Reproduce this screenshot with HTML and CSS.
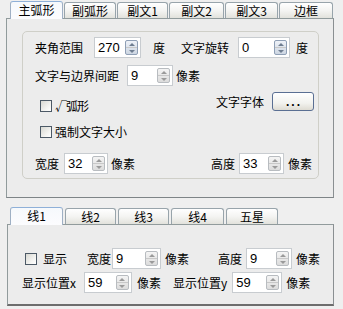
FILE: index.html
```html
<!DOCTYPE html>
<html>
<head>
<meta charset="utf-8">
<link rel="stylesheet" href="styles.css">
</head>
<body>
<div class="tabstrip top-strip">
  <div class="tab sel w53">主弧形</div>
  <div class="tab w52">副弧形</div>
  <div class="tab w51">副文1</div>
  <div class="tab w55">副文2</div>
  <div class="tab w53">副文3</div>
  <div class="tab w54">边框</div>
</div>
<div class="panel panel1">
  <div class="group">
    <div class="row r1">
      <span class="t">夹角范围</span>
      <div class="spin ml11 sw47 active"><span class="val">270</span><span class="btns"><i class="up"></i><i class="dn"></i></span></div>
      <span class="t ml12">度</span>
      <span class="t ml16">文字旋转</span>
      <div class="spin ml9 sw52 active"><span class="val">0</span><span class="btns"><i class="up"></i><i class="dn"></i></span></div>
      <span class="t ml6">度</span>
    </div>
    <div class="row r2">
      <span class="t">文字与边界间距</span>
      <div class="spin ml8 sw46"><span class="val">9</span><span class="btns"><i class="up"></i><i class="dn"></i></span></div>
      <span class="t ml3">像素</span>
    </div>
    <div class="mid">
      <div class="checks">
        <label class="chk"><span class="box"></span><span class="t narrow">√弧形</span></label>
        <label class="chk c2"><span class="box"></span><span class="t">强制文字大小</span></label>
      </div>
      <div class="fontpick">
        <span class="t">文字字体</span>
        <button class="dots">...</button>
      </div>
    </div>
    <div class="row r4">
      <span class="t">宽度</span>
      <div class="spin ml5 sw44"><span class="val">32</span><span class="btns"><i class="up"></i><i class="dn"></i></span></div>
      <span class="t ml3">像素</span>
      <span class="t ml76">高度</span>
      <div class="spin ml4 sw45"><span class="val">33</span><span class="btns"><i class="up"></i><i class="dn"></i></span></div>
      <span class="t ml4">像素</span>
    </div>
  </div>
</div>

<div class="tabstrip bottom-strip">
  <div class="tab sel w53">线1</div>
  <div class="tab w51 gap">线2</div>
  <div class="tab w51 gap">线3</div>
  <div class="tab w53 gap">线4</div>
  <div class="tab w52 gap">五星</div>
</div>
<div class="panel panel2">
  <div class="row p2r1">
    <label class="chk"><span class="box"></span><span class="t ml3">显示</span></label>
    <span class="t ml20">宽度</span>
    <div class="spin ml1 sw49"><span class="val">9</span><span class="btns"><i class="up"></i><i class="dn"></i></span></div>
    <span class="t ml4">像素</span>
    <span class="t ml29">高度</span>
    <div class="spin ml4 sw46"><span class="val">9</span><span class="btns"><i class="up"></i><i class="dn"></i></span></div>
    <span class="t ml4">像素</span>
  </div>
  <div class="row p2r2">
    <span class="t">显示位置x</span>
    <div class="spin ml8 sw48"><span class="val">59</span><span class="btns"><i class="up"></i><i class="dn"></i></span></div>
    <span class="t ml5">像素</span>
    <span class="t ml12">显示位置y</span>
    <div class="spin ml5 sw50"><span class="val">59</span><span class="btns"><i class="up"></i><i class="dn"></i></span></div>
    <span class="t ml4">像素</span>
  </div>
</div>
</body>
</html>
```
FILE: styles.css
```css
html, body {
  margin: 0;
  padding: 0;
}
body {
  width: 343px;
  height: 309px;
  overflow: hidden;
  background: #efefef;
  font-family: "Noto Sans CJK SC", "Noto Sans", sans-serif;
  font-size: 12px;
  color: #000;
}

/* tabs */
.tabstrip {
  display: flex;
  align-items: flex-end;
  padding-left: 10px;
  height: 18px;
  box-sizing: border-box;
}
.top-strip { padding-top: 1px; }
.bottom-strip { margin-top: 8px; height: 18px; }
.tab {
  height: 16px;
  box-sizing: border-box;
  border: 1px solid #98a4ab;
  border-bottom: none;
  border-radius: 3px 3px 0 0;
  background: linear-gradient(#ffffff, #f4f4f2 50%, #e2e2dc);
  text-align: center;
  line-height: 15px;
  margin-right: 1px;
  position: relative;
  top: 0;
}
.tab.sel {
  height: 18px;
  background: linear-gradient(#f6f9fc, #fcfcfe);
  border-color: #9fb0c4;
  border-top: 1px solid #8fb0d8;
  line-height: 16px;
  margin-bottom: -1px;
  z-index: 1;
}
.tab.gap { margin-left: 1px; }
.w51 { width: 51px; }
.w52 { width: 52px; }
.w53 { width: 53px; }
.w54 { width: 54px; }
.w55 { width: 55px; }

/* panels */
.panel {
  box-sizing: border-box;
  border: 1px solid #919b9c;
  border-right-color: #8a8f92;
  border-bottom-color: #7e8487;
  background: #ececec;
}
.panel1 {
  margin-left: 6px;
  width: 328px;
  height: 180px;
  padding: 12px 0 0 15px;
}
.panel2 {
  margin-left: 7px;
  width: 327px;
  height: 82px;
  padding: 23px 0 0 0;
  border-bottom: 2px solid #6d6d6d;
}

.group {
  box-sizing: border-box;
  width: 297px;
  height: 148px;
  border: 1px solid #cfcfc8;
  border-radius: 5px;
  padding: 5px 0 0 12px;
}

.row {
  display: flex;
  align-items: center;
  height: 21px;
}
.r2 { margin-top: 7px; }
.r4 { margin-top: 12px; }

.mid {
  display: flex;
  margin-top: 6px;
}
.checks {
  padding-top: 5px;
  padding-left: 5px;
  width: 164px;
}
.chk {
  display: flex;
  align-items: center;
  height: 18px;
}
.chk.c2 { margin-top: 8px; }
.box {
  width: 12px;
  height: 12px;
  box-sizing: border-box;
  border: 1px solid #4c5966;
  background: linear-gradient(135deg, #d8d8d2, #f6f6f4 70%, #ffffff);
  margin-right: 3px;
  flex: none;
}
.narrow { letter-spacing: -1px; }
.fontpick {
  display: flex;
  align-items: center;
  height: 19px;
  margin-left: 12px;
}
.dots {
  margin-left: 8px;
  width: 42px;
  height: 19px;
  padding: 0;
  border: 1px solid #5a6f93;
  border-radius: 3px;
  background: linear-gradient(#ffffff, #f2f2ee 60%, #dedbd2);
  font-family: "Liberation Sans", sans-serif;
  font-weight: bold;
  font-size: 12px;
  letter-spacing: 2px;
  line-height: 10px;
  color: #000;
  text-indent: 2px;
}

.t { white-space: nowrap; line-height: 16px; }

/* spin box */
.spin {
  display: flex;
  align-items: center;
  justify-content: space-between;
  height: 21px;
  box-sizing: border-box;
  border: 1px solid #c8ccd0;
  background: #fff;
  padding: 0 2px 0 3px;
}
.val {
  font-family: "Liberation Sans", sans-serif;
  font-size: 13px;
  line-height: 14px;
}
.btns {
  display: flex;
  flex-direction: column;
  width: 13px;
  height: 15px;
  box-sizing: border-box;
  border: 1px solid #b8bcc0;
  border-radius: 2px;
  background: linear-gradient(#f4f4f4, #dcdcdc);
}
.active .btns {
  border-color: #8f9fb5;
  background: linear-gradient(#eef2f8, #cdd6e2);
}
.btns i {
  flex: 1;
  display: flex;
  align-items: center;
  justify-content: center;
}
.btns i.up { border-bottom: 1px solid #c8c8c8; }
.btns i::after {
  content: "";
  width: 0;
  height: 0;
  border-left: 3px solid transparent;
  border-right: 3px solid transparent;
}
.btns i.up::after { border-bottom: 3px solid #9a9a9a; }
.btns i.dn::after { border-top: 3px solid #9a9a9a; }
.active .btns i.up::after { border-bottom-color: #6e7d90; }
.active .btns i.dn::after { border-top-color: #6e7d90; }

.sw44 { width: 44px; }
.sw45 { width: 45px; }
.sw46 { width: 46px; }
.sw47 { width: 47px; }
.sw48 { width: 48px; }
.sw49 { width: 49px; }
.sw50 { width: 50px; }
.sw52 { width: 52px; }

.ml1 { margin-left: 1px; }
.ml3 { margin-left: 3px; }
.ml4 { margin-left: 4px; }
.ml5 { margin-left: 5px; }
.ml6 { margin-left: 6px; }
.ml8 { margin-left: 8px; }
.ml9 { margin-left: 9px; }
.ml11 { margin-left: 11px; }
.ml12 { margin-left: 12px; }
.ml16 { margin-left: 16px; }
.ml20 { margin-left: 20px; }
.ml29 { margin-left: 29px; }
.ml76 { margin-left: 76px; }

.p2r1 { padding-left: 17px; }
.p2r2 { padding-left: 14px; margin-top: 3px; }
```
